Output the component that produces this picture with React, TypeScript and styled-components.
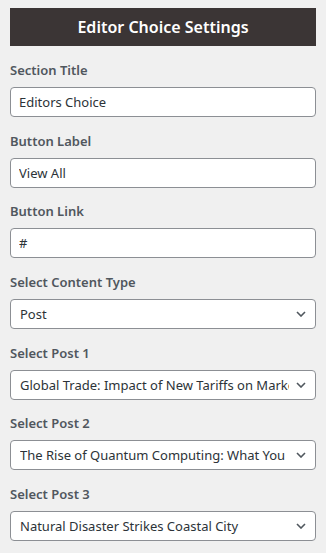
import React from 'react';
import styled, { createGlobalStyle } from 'styled-components';

const GlobalStyle = createGlobalStyle`
  body {
    margin: 0;
    background: #f0f0f0;
    font-family: "Noto Sans", "Open Sans", sans-serif;
  }
  * { box-sizing: border-box; }
`;

const Panel = styled.div`
  padding: 8px 10px;
`;

const Header = styled.h2`
  margin: 0 0 15px;
  height: 38px;
  background: #3b3535;
  color: #ffffff;
  font-size: 16px;
  font-weight: 600;
  display: flex;
  align-items: center;
  justify-content: center;
`;

const Fields = styled.div`
  display: flex;
  flex-direction: column;
  gap: 14.7px;
`;

const Field = styled.div`
  display: flex;
  flex-direction: column;
  gap: 8px;
`;

const Label = styled.label`
  font-size: 13px;
  font-weight: 600;
  line-height: 18px;
  color: #50575e;
`;

const controlBase = `
  width: 100%;
  height: 30px;
  margin: 0;
  border: 1px solid #8c8f94;
  border-radius: 4px;
  background: #ffffff;
  color: #2c3338;
  font-family: "Noto Sans", "Open Sans", sans-serif;
  font-size: 13px;
  outline: none;
`;

const Input = styled.input`
  ${controlBase}
  padding: 0 8px;
`;

const SelectWrap = styled.div`
  position: relative;
`;

const Select = styled.select`
  ${controlBase}
  appearance: none;
  padding: 0 26px 0 9px;
`;

const Chevron = styled.svg`
  position: absolute;
  right: 10px;
  top: 50%;
  margin-top: -3px;
  pointer-events: none;
`;

type TextFieldProps = { id: string; label: string; value: string };

const TextField: React.FC<TextFieldProps> = ({ id, label, value }) => (
  <Field>
    <Label htmlFor={id}>{label}</Label>
    <Input id={id} type="text" defaultValue={value} />
  </Field>
);

type SelectFieldProps = { id: string; label: string; value: string };

const SelectField: React.FC<SelectFieldProps> = ({ id, label, value }) => (
  <Field>
    <Label htmlFor={id}>{label}</Label>
    <SelectWrap>
      <Select id={id} defaultValue={value}>
        <option value={value}>{value}</option>
      </Select>
      <Chevron width="10" height="6" viewBox="0 0 10 6">
        <path d="M1 1l4 4 4-4" fill="none" stroke="#50575e" strokeWidth="1.6" />
      </Chevron>
    </SelectWrap>
  </Field>
);

const App: React.FC = () => {
  return (
    <>
      <GlobalStyle />
      <Panel>
        <Header>Editor Choice Settings</Header>
        <Fields>
          <TextField id="section-title" label="Section Title" value="Editors Choice" />
          <TextField id="button-label" label="Button Label" value="View All" />
          <TextField id="button-link" label="Button Link" value="#" />
          <SelectField id="content-type" label="Select Content Type" value="Post" />
          <SelectField
            id="post-1"
            label="Select Post 1"
            value="Global Trade: Impact of New Tariffs on Markets"
          />
          <SelectField
            id="post-2"
            label="Select Post 2"
            value="The Rise of Quantum Computing: What You Need to Know"
          />
          <SelectField id="post-3" label="Select Post 3" value="Natural Disaster Strikes Coastal City" />
        </Fields>
      </Panel>
    </>
  );
};

export default App;
